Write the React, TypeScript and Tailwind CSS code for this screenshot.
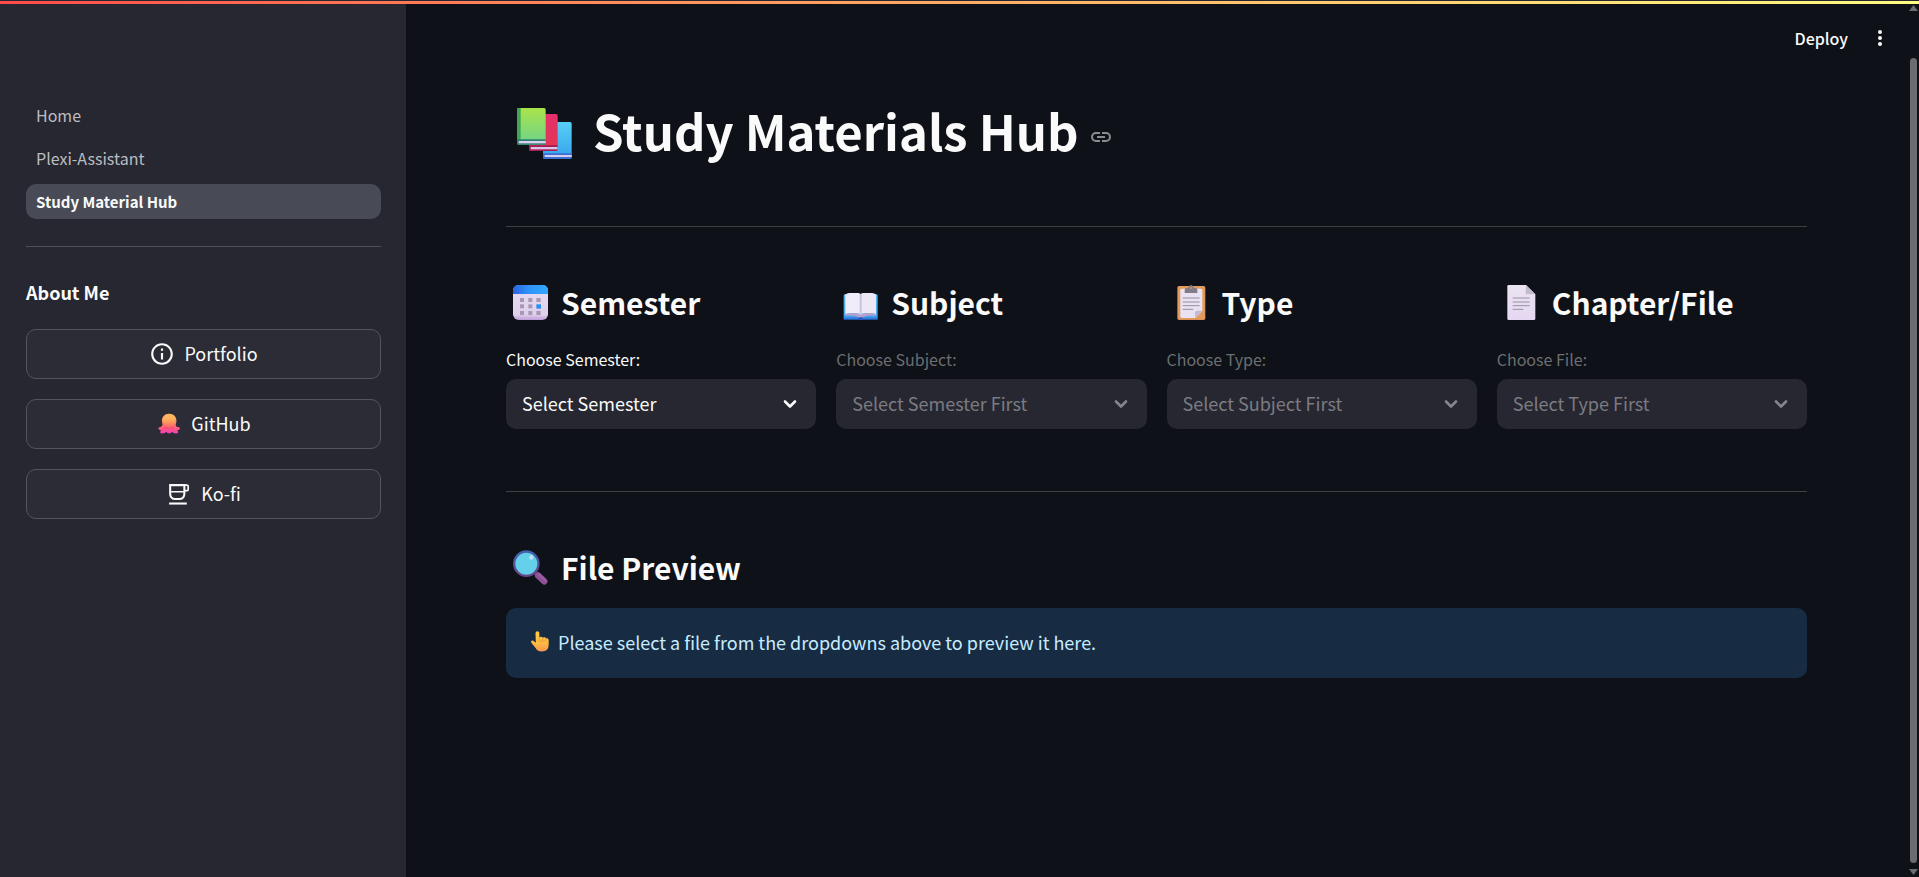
import type { ReactNode } from 'react';

function BooksIcon() {
  return (
    <svg viewBox="0 0 165 153" className="h-[51px] w-[55px] shrink-0" aria-hidden="true">
      <defs>
        <linearGradient id="bk-g" x1="0" y1="0" x2="0" y2="1">
          <stop offset="0" stopColor="#a9e34b" />
          <stop offset="1" stopColor="#6dd38c" />
        </linearGradient>
        <linearGradient id="bk-r" x1="0" y1="0" x2="0" y2="1">
          <stop offset="0" stopColor="#e52f6d" />
          <stop offset="1" stopColor="#e0384f" />
        </linearGradient>
        <linearGradient id="bk-b" x1="0" y1="0" x2="0" y2="1">
          <stop offset="0" stopColor="#56d0f5" />
          <stop offset="1" stopColor="#36a2ee" />
        </linearGradient>
      </defs>
      <rect x="78" y="42" width="86" height="111" rx="5" fill="url(#bk-b)" />
      <path d="M78 136h86v12q0 5-5 5H83q-5 0-5-5z" fill="#3d6fd0" />
      <path d="M82 141h82v6H84z" fill="#d8cdf2" />
      <rect x="36" y="18" width="86" height="111" rx="5" fill="url(#bk-r)" />
      <path d="M36 112h86v12q0 5-5 5H41q-5 0-5-5z" fill="#a51c52" />
      <path d="M41 117h81v7H41z" fill="#dcc5e8" />
      <rect x="0" y="0" width="86" height="110" rx="5" fill="url(#bk-g)" />
      <path d="M5 0h6v96H0V5q0-5 5-5z" fill="#43a552" />
      <path d="M0 94h86v11q0 5-5 5H5q-5 0-5-5z" fill="#2d7f72" />
      <path d="M5 99h81v7H5z" fill="#dcd0ee" />
    </svg>
  );
}

function CalendarIcon() {
  return (
    <svg viewBox="0 0 105 105" className="size-[35px] shrink-0" aria-hidden="true">
      <defs>
        <linearGradient id="cal-t" x1="0" y1="0" x2="1" y2="0">
          <stop offset="0" stopColor="#2a63dc" />
          <stop offset="0.45" stopColor="#2f93fb" />
          <stop offset="1" stopColor="#32a8ff" />
        </linearGradient>
        <linearGradient id="cal-b" x1="0" y1="0" x2="0" y2="1">
          <stop offset="0" stopColor="#e6dcf1" />
          <stop offset="0.85" stopColor="#dfd0ec" />
          <stop offset="1" stopColor="#bf9cd8" />
        </linearGradient>
      </defs>
      <rect width="105" height="105" rx="17" fill="url(#cal-b)" />
      <path d="M0 27V17Q0 0 17 0h71q17 0 17 17v10z" fill="url(#cal-t)" />
      <g fill="#a798b4">
        <rect x="21" y="39" width="12" height="12" />
        <rect x="46" y="39" width="12" height="12" />
        <rect x="70" y="39" width="13" height="12" />
        <rect x="21" y="58" width="12" height="12" />
        <rect x="46" y="58" width="12" height="12" />
        <rect x="21" y="78" width="12" height="12" />
        <rect x="46" y="78" width="12" height="12" />
        <rect x="70" y="78" width="13" height="12" />
      </g>
      <rect x="70" y="58" width="14" height="13" fill="#2c8ef2" />
    </svg>
  );
}

function OpenBookIcon() {
  return (
    <svg viewBox="0 0 105 105" className="size-[35px] shrink-0" aria-hidden="true">
      <defs>
        <linearGradient id="ob" x1="0" y1="0" x2="0" y2="1">
          <stop offset="0" stopColor="#55b9e8" />
          <stop offset="0.85" stopColor="#41a9f0" />
          <stop offset="1" stopColor="#2867d6" />
        </linearGradient>
      </defs>
      <g transform="translate(2 0)">
        <path d="M5 27h92q5 0 5 5v72H0V32q0-5 5-5z" fill="url(#ob)" />
        <path d="M6 92V86q34-6 45 5 11-11 45-5v6q-34-3-40 7H46Q40 89 6 92z" fill="#b7a0cb" />
        <path d="M5 88V29q5-5 11-5h28q7 0 7 6v59q-4-5-14-5H20q-9 0-15 4z" fill="#f1ecf9" />
        <path d="M97 88V29q-5-5-11-5H58q-7 0-7 6v59q4-5 14-5h17q9 0 15 4z" fill="#ede7f6" />
        <path d="M48 28h6v62h-6z" fill="#cdc2df" />
        <rect x="44" y="97" width="14" height="8" rx="3" fill="#2458c8" />
      </g>
    </svg>
  );
}

function ClipboardIcon() {
  return (
    <svg viewBox="0 0 105 105" className="size-[35px] shrink-0" aria-hidden="true">
      <rect x="10" y="3" width="84" height="102" rx="5" fill="#dc9055" />
      <rect x="12" y="4" width="80" height="98" rx="5" fill="#e49c5e" />
      <path d="M24 11h56q5 0 5 5v62L64 99H24q-5 0-5-5V16q0-5 5-5z" fill="#e9e2f2" />
      <path d="M85 77 63 99V83q0-6 6-6z" fill="#c5b8d4" />
      <path d="M32 24V14q0-6 7-6h4Q45 0 51 0t8 8h4q7 0 7 6v10z" fill="#827c88" />
      <circle cx="51" cy="9" r="3" fill="#dc9055" />
      <g stroke="#978e9f" strokeWidth="3">
        <path d="M26 39h51M26 51h51M26 62h51M26 73h32" />
      </g>
    </svg>
  );
}

function PageIcon() {
  return (
    <svg viewBox="0 0 105 105" className="size-[35px] shrink-0" aria-hidden="true">
      <defs>
        <linearGradient id="pg" x1="0" y1="0" x2="0" y2="1">
          <stop offset="0" stopColor="#ebe5f1" />
          <stop offset="1" stopColor="#e5d7f1" />
        </linearGradient>
      </defs>
      <path d="M14 0h52l28 28v73q0 4-4 4H14q-4 0-4-4V4q0-4 4-4z" fill="url(#pg)" />
      <path d="M66 0 94 28H70q-5 0-5-5z" fill="#c5bbcf" />
      <g stroke="#9b91a6" strokeWidth="3">
        <path d="M26 39h51M26 51h51M26 62h51M26 73h32" />
      </g>
    </svg>
  );
}

function MagnifierIcon() {
  return (
    <svg viewBox="0 0 105 105" className="size-[35px] shrink-0" aria-hidden="true">
      <defs>
        <linearGradient id="mg" x1="0" y1="0" x2="0" y2="1">
          <stop offset="0" stopColor="#4060ae" />
          <stop offset="1" stopColor="#6b4587" />
        </linearGradient>
      </defs>
      <path d="m64 66 8 8" stroke="#63407a" strokeWidth="9" />
      <path d="m75 76 19 18" stroke="#8d5296" strokeWidth="19" strokeLinecap="round" />
      <path d="m78 74 19 18" stroke="#a05fa8" strokeWidth="5" strokeLinecap="round" />
      <circle cx="40" cy="41" r="40" fill="url(#mg)" />
      <circle cx="40" cy="41" r="33" fill="#64d0ea" />
      <ellipse cx="55" cy="22" rx="6" ry="7" fill="#b9e4fa" transform="rotate(35 55 22)" />
    </svg>
  );
}

function PointUpIcon() {
  return (
    <svg viewBox="0 0 56 64" className="h-[21px] w-[18px] shrink-0" aria-hidden="true">
      <defs>
        <linearGradient id="pt" x1="0" y1="0" x2="0" y2="1">
          <stop offset="0" stopColor="#ffcb3d" />
          <stop offset="0.6" stopColor="#ffb944" />
          <stop offset="1" stopColor="#f79450" />
        </linearGradient>
      </defs>
      <path
        d="M14 6q0-6 6-6t6 6v14q1-3 5-3 5 0 6 4 1-3 5-2 4 0 5 4 1-2 4-1 4 1 4 6v14q0 20-21 21-14 0-19-10L1 36q-2-5 2-7 3-1 6 2l6 5z"
        fill="url(#pt)"
      />
      <path d="M26 20v11q5 3 10 0V20M36 30q6 3 11-1v-6" fill="none" stroke="#e58f35" strokeWidth="2" />
    </svg>
  );
}

function InfoIcon() {
  return (
    <svg viewBox="0 0 24 24" className="size-[26px] shrink-0" fill="#fafafa" aria-hidden="true">
      <path d="M11 7h2v2h-2zm0 4h2v6h-2zm1-9C6.480 2 2 6.480 2 12s4.480 10 10 10 10-4.480 10-10S17.520 2 12 2zm0 18c-4.410 0-8-3.590-8-8s3.590-8 8-8 8 3.590 8 8-3.590 8-8 8z" />
    </svg>
  );
}

function OctopusIcon() {
  return (
    <svg viewBox="0 0 75 75" className="size-[26px] shrink-0" aria-hidden="true">
      <defs>
        <linearGradient id="oc" x1="0" y1="0" x2="0" y2="1">
          <stop offset="0" stopColor="#ffb25c" />
          <stop offset="0.45" stopColor="#f98a5c" />
          <stop offset="0.7" stopColor="#ff5d78" />
          <stop offset="1" stopColor="#f63dbb" />
        </linearGradient>
        <linearGradient id="oc-h" x1="0" y1="0" x2="0" y2="1">
          <stop offset="0.4" stopColor="#ffb860" stopOpacity=".8" />
          <stop offset="1" stopColor="#ff8a60" stopOpacity="0" />
        </linearGradient>
      </defs>
      <path
        d="M38 8c13 0 21 9 21 20 0 5-2 8-2 12 0 5 3 7 7 6q6 0 5 5-2 4-9 5 4 1 4 5-1 5-8 4-7 0-9-5-3 5-9 5t-9-5q-2 5-9 5-7 1-8-4 0-4 4-5-7-1-9-5-1-5 5-5 4 1 7-6c0-4-2-7-2-12C17 17 25 8 38 8z"
        fill="url(#oc)"
      />
      <circle cx="38" cy="26" r="18" fill="url(#oc-h)" />
      <path d="M23 49q10-4 15 4 5-8 15-4" fill="none" stroke="#e83c70" strokeWidth="2" />
    </svg>
  );
}

function CupIcon() {
  return (
    <svg viewBox="0 0 75 75" className="size-[26px] shrink-0" fill="none" stroke="#fafafa" strokeWidth="6" aria-hidden="true">
      <path d="M12 12h41v24q0 16-15 16H27q-15 0-15-16z" />
      <path d="M50 12h10q4 0 4 4v7q0 5-5 5h-6M12 31h41" strokeWidth="5" />
      <path d="M9 65h51" />
    </svg>
  );
}

function LinkIcon() {
  return (
    <svg viewBox="0 0 20 10" className="h-[10px] w-5" fill="none" stroke="#8b8c90" strokeWidth="2" aria-hidden="true">
      <path d="M9 1H5a4 4 0 0 0 0 8h4M11 1h4a4 4 0 0 1 0 8h-4M6 5h8" />
    </svg>
  );
}

const pages = ['Home', 'Plexi-Assistant', 'Study Material Hub'];

const links = [
  { label: 'Portfolio', icon: <InfoIcon /> },
  { label: 'GitHub', icon: <OctopusIcon /> },
  { label: 'Ko-fi', icon: <CupIcon /> },
];

const fields = [
  { id: 'semester', title: 'Semester', label: 'Choose Semester:', value: 'Select Semester', icon: <CalendarIcon />, disabled: false },
  { id: 'subject', title: 'Subject', label: 'Choose Subject:', value: 'Select Semester First', icon: <OpenBookIcon />, disabled: true },
  { id: 'type', title: 'Type', label: 'Choose Type:', value: 'Select Subject First', icon: <ClipboardIcon />, disabled: true },
  { id: 'file', title: 'Chapter/File', label: 'Choose File:', value: 'Select Type First', icon: <PageIcon />, disabled: true },
];

function Heading({ icon, children }: { icon: ReactNode; children: ReactNode }) {
  return (
    <h3 className="flex items-center gap-[13px] pl-[7px] text-[30px] leading-[41px] font-semibold whitespace-nowrap">
      {icon}
      {children}
    </h3>
  );
}

function Sidebar() {
  return (
    <aside className="w-[406px] shrink-0 bg-[#262730] pt-[98px] pr-[25px] pl-[26px]">
      <nav className="flex flex-col gap-2">
        {pages.map((page, i) => (
          <a
            key={page}
            href="#"
            aria-current={i === 2 ? 'page' : undefined}
            className={
              i === 2
                ? 'rounded-[10px] bg-[#484a55] px-[10px] text-[15px] leading-[35px] font-semibold'
                : 'rounded-[10px] px-[10px] text-base leading-[35px] text-[#bcbdc1]'
            }
          >
            {page}
          </a>
        ))}
      </nav>
      <hr className="mt-[27px] border-[#4d4e57]" />
      <h4 className="mt-[30px] text-lg leading-[30px] font-semibold">About Me</h4>
      <div className="mt-[22px] flex flex-col gap-5">
        {links.map(({ label, icon }) => (
          <a
            key={label}
            href="#"
            className="flex h-[50px] items-center justify-center gap-[9px] rounded-[10px] border border-[#53545d] bg-[#2b2c36] text-lg"
          >
            {icon}
            <span className="pb-0.5">{label}</span>
          </a>
        ))}
      </div>
    </aside>
  );
}

export default function App() {
  return (
    <div className="relative flex min-h-screen bg-[#0e1117] font-['Noto_Sans_CJK_SC','Noto_Sans',sans-serif] text-[#fafafa]">
      <div className="absolute inset-x-0 top-0 h-1 border-t border-[#262730] bg-linear-to-r from-[#ff4b4b] to-[#fffd80]" />
      <Sidebar />
      <div className="min-w-0 flex-1">
        <header className="flex h-[76px] items-center justify-end gap-6 pr-[19px]">
          <button type="button" className="text-base font-medium">
            Deploy
          </button>
          <button type="button" aria-label="Main menu" className="flex w-4 justify-center">
            <svg viewBox="0 0 4 16" className="h-4 w-1" fill="#fafafa" aria-hidden="true">
              <circle cx="2" cy="2" r="2" />
              <circle cx="2" cy="8" r="2" />
              <circle cx="2" cy="14" r="2" />
            </svg>
          </button>
        </header>
        <main className="px-[100px] pt-[23px]">
          <h1 className="flex h-[68px] items-center pl-[11px] text-[49px] leading-[62px] font-bold">
            <BooksIcon />
            <span className="ml-[21px] pb-[6px]">Study Materials Hub</span>
            <a href="#" aria-label="Link to heading" className="ml-3 pt-2">
              <LinkIcon />
            </a>
          </h1>
          <hr className="mt-[59px] border-[#3e4046]" />
          <section className="mt-[55px] grid grid-cols-4 gap-5">
            {fields.map((f) => (
              <div key={f.id} className="flex min-w-0 flex-col">
                <Heading icon={f.icon}>{f.title}</Heading>
                <label
                  htmlFor={f.id}
                  className={
                    f.disabled
                      ? 'mt-6 text-base leading-6 text-[#6c6e71]'
                      : 'mt-6 text-base leading-6'
                  }
                >
                  {f.label}
                </label>
                <div className="mt-2 grid items-center">
                  <select
                    id={f.id}
                    disabled={f.disabled}
                    className="col-start-1 row-start-1 h-[50px] w-full appearance-none rounded-[10px] bg-[#262730] px-4 pb-0.5 text-lg disabled:text-[#7b7b81] disabled:opacity-100"
                  >
                    <option>{f.value}</option>
                  </select>
                  <svg
                    viewBox="0 0 14 10"
                    className={
                      f.disabled
                        ? 'pointer-events-none col-start-1 row-start-1 mr-[19px] h-[10px] w-[14px] justify-self-end stroke-[#85868b]'
                        : 'pointer-events-none col-start-1 row-start-1 mr-[19px] h-[10px] w-[14px] justify-self-end stroke-[#fafafa]'
                    }
                    fill="none"
                    strokeWidth="2.6"
                    strokeLinecap="round"
                    strokeLinejoin="round"
                    aria-hidden="true"
                  >
                    <path d="m2 2.500 5 5 5-5" />
                  </svg>
                </div>
              </div>
            ))}
          </section>
          <hr className="mt-[62px] border-[#3e4046]" />
          <section className="mt-[55px]">
            <Heading icon={<MagnifierIcon />}>File Preview</Heading>
            <div
              role="status"
              className="mt-5 flex h-[70px] items-center gap-[9px] rounded-[10px] bg-[#172c43] px-[25px] pb-[3px] text-lg text-[#c7ebff]"
            >
              <PointUpIcon />
              Please select a file from the dropdowns above to preview it here.
            </div>
          </section>
        </main>
      </div>
      <div className="flex w-3 shrink-0 flex-col items-center pt-[5px] pb-[2px]" aria-hidden="true">
        <svg viewBox="0 0 9 6" className="h-[6px] w-[9px]" fill="#6b6c6f">
          <path d="M4.500 0 9 6H0z" />
        </svg>
        <div className="mt-[47px] mb-[6px] w-[7px] flex-1 rounded-full bg-[#6b6c6f]" />
        <svg viewBox="0 0 9 6" className="h-[6px] w-[9px]" fill="#6b6c6f">
          <path d="M0 0h9L4.500 6z" />
        </svg>
      </div>
    </div>
  );
}
